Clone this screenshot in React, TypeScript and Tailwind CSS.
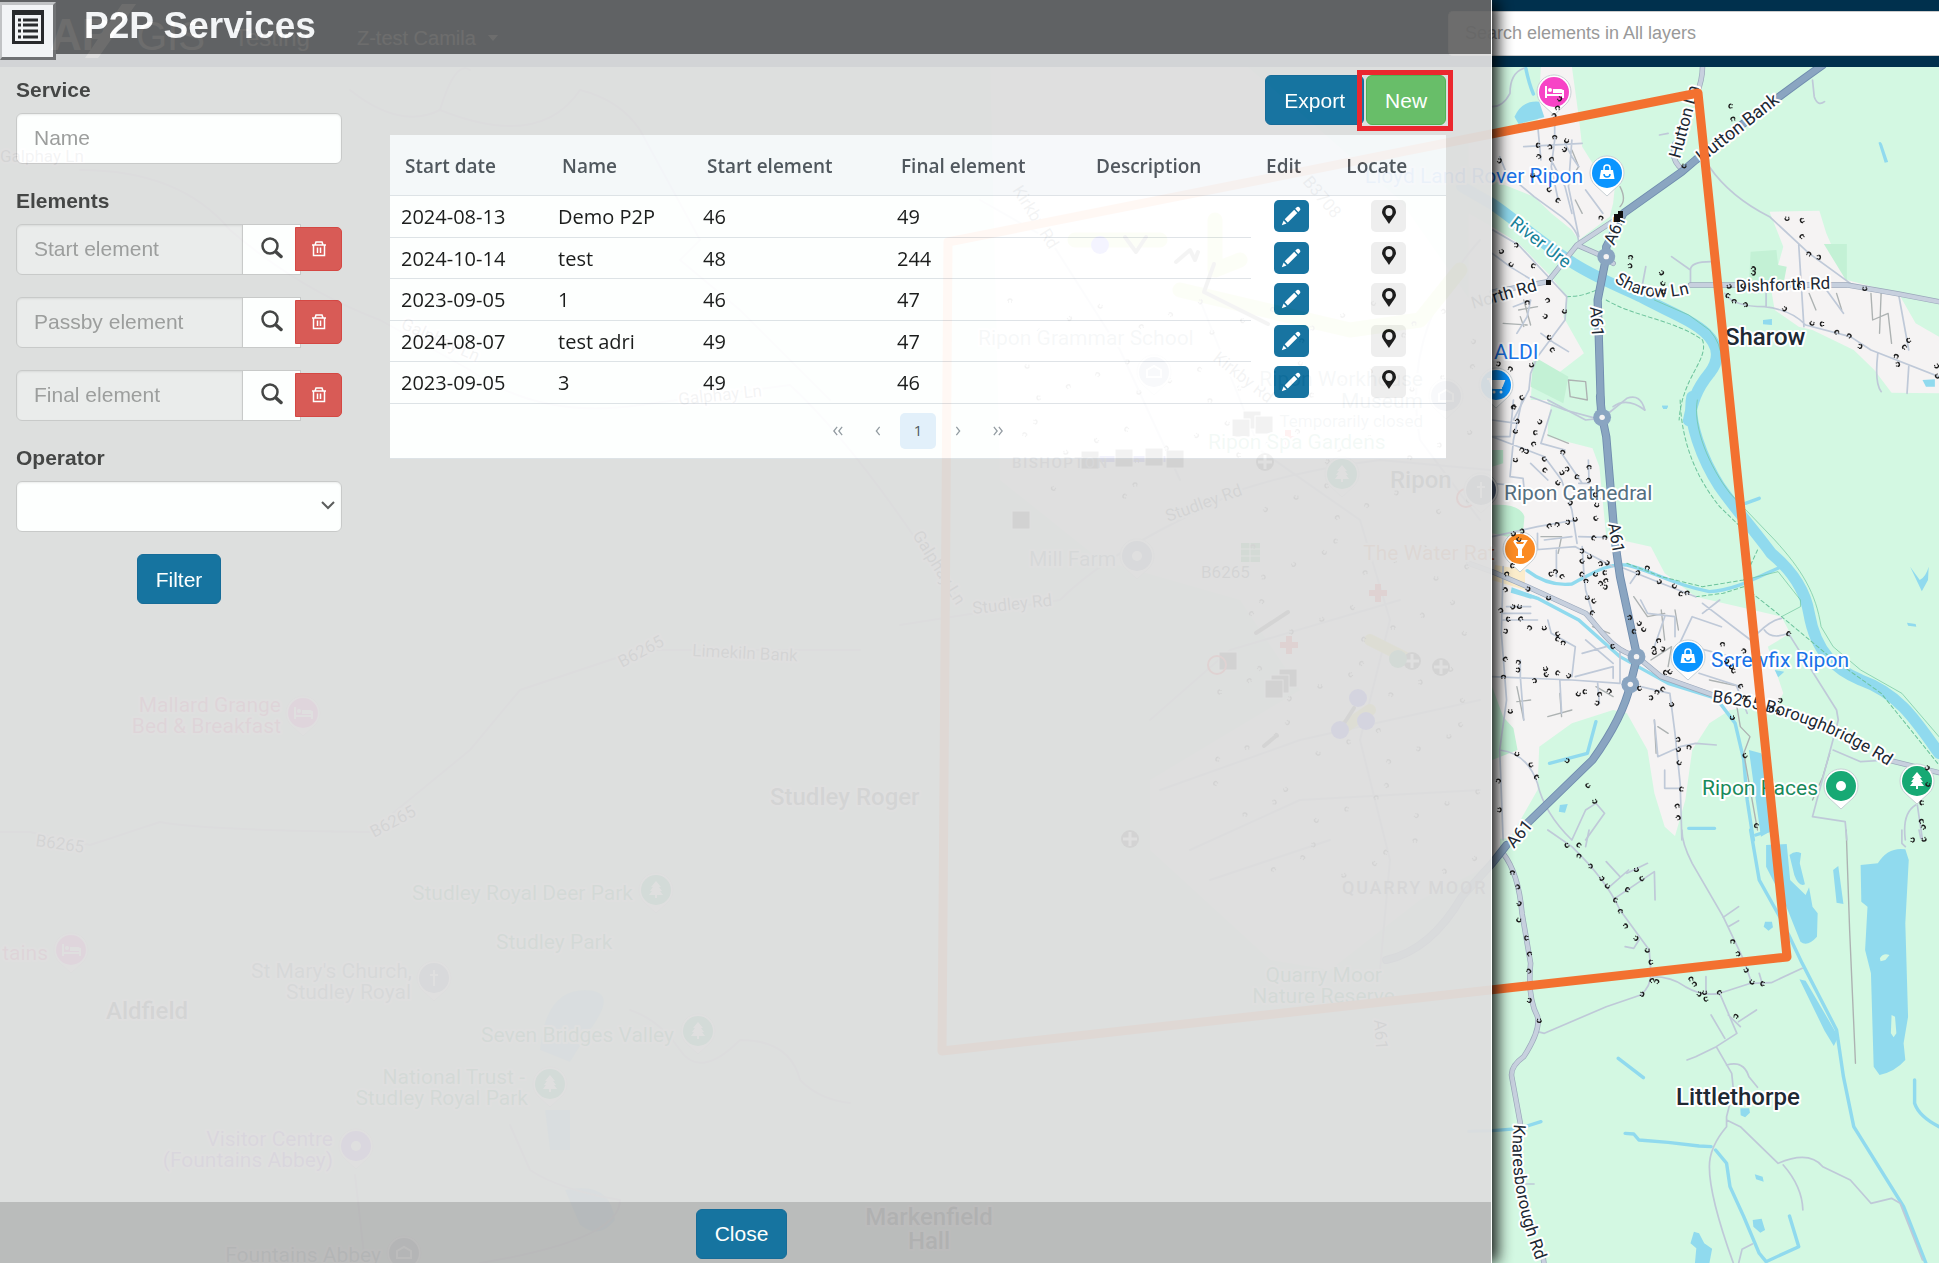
import React from "react";

/* ---------- Map data ---------- */

// Each sheet is drawn on its own local grid; the transform puts it on the map.
const SHEETS = [
  "translate(1400 0) scale(0.34375 0.33333)",
  "translate(1400 400) scale(0.34375 0.33333)",
  "translate(1400 830) scale(0.34375 0.33333)",
];

const URBAN = [
  "M410 200 L500 200 L520 350 L530 440 L560 490 L625 560 L620 610 L610 650 L520 720 L500 690 L440 640 L390 590 L268 540 L200 500 L200 420 L400 370Z M200 640 L268 680 L345 730 L440 830 L485 890 L475 950 L535 1060 L460 1120 L390 1070 L380 1200 L440 1210 L430 1265 L200 1265Z M1075 635 L1220 632 L1240 700 L1300 840 L1450 880 L1500 970 L1568 1010 L1568 1180 L1430 1178 L1380 1110 L1320 1050 L1200 990 L1160 980 L1090 930 L1080 870 L1115 740Z",
  "M200 0 L430 0 L430 110 L560 145 L580 200 L600 410 L730 440 L770 520 L860 590 L1110 650 L1135 700 L1070 740 L1115 880 L1100 910 L960 930 L900 970 L850 1050 L830 1200 L800 1308 L770 1280 L740 1180 L720 1050 L660 940 L620 930 L500 970 L405 1040 L400 1170 L320 1315 L200 1320Z",
  "",
];

const PARKS = [
  "M1020 755 L1095 750 L1100 795 L1125 800 L1115 855 L1015 855Z M1233 732 L1300 732 L1300 845Z M390 1070 L490 1130 L475 1210 L380 1160Z",
  "M268 315 Q350 310 362 350 L358 395 L320 412 L268 400Z M268 860 L300 950 L330 985 L342 1050 L268 1080Z M268 150 L300 150 L300 190 L268 200Z",
  "",
];

const LAKES = [
  "M333 350 Q355 300 405 305 L420 352 L345 372Z M1392 428 Q1400 420 1405 440 L1420 486 L1410 488Z M1056 960 L1082 957 L1082 975 L1056 973Z M762 1217 L780 1217 L776 1227 L766 1227Z M1520 1140 L1556 1138 L1556 1160 L1530 1160Z",
  "M1015 1050 L1050 1060 L1078 1110 L1084 1290 L1050 1310 L1035 1200Z M465 1215 L488 1212 L480 1238 L462 1235Z M1484 500 L1512 540 Q1530 530 1538 500 L1536 540 L1518 574Z M1475 668 L1500 672 L1502 680 L1478 677Z M1090 810 L1118 815 L1100 832Z M762 17 L780 17 L776 27 L766 27Z M325 562 L400 590 L380 596 L322 578Z",
  "M1065 45 L1125 42 L1135 150 L1180 195 L1190 172 L1200 230 L1215 250 L1213 320 Q1185 352 1165 335 L1120 220 L1065 110Z M1133 75 Q1150 60 1167 70 L1163 100 L1178 163 Q1160 172 1147 135Z M1340 105 L1390 100 Q1420 50 1470 58 L1480 90 L1470 280 L1478 560 L1465 640 L1470 690 Q1440 725 1395 735 L1378 710 L1370 430 L1353 360 L1360 230 L1342 215Z M1260 120 L1275 108 L1290 222 L1270 218Z M1062 275 L1082 275 L1085 292 L1072 302 L1058 290Z M1162 448 L1180 452 L1275 620 L1262 648 L1235 602Z M990 835 L1016 835 L1018 848 L1004 862 L991 856Z M1032 1033 L1055 1040 L1058 1055 L1036 1048Z M1026 1170 L1052 1166 L1062 1200 L1048 1208 L1028 1190Z M845 1240 L855 1205 L870 1210 L885 1240 L908 1256 L900 1300 L858 1300 L862 1255Z",
];

const ISLANDS = "M1396 385 Q1405 368 1424 375 L1412 390 L1398 394Z M1430 555 L1440 560 L1444 610 L1436 622 L1428 610Z";

const WIDE_RIVERS = [
  "M180 560 L268 612 C330 655 400 720 490 780 C560 830 640 860 700 890 C770 930 850 960 890 1000 C930 1040 930 1080 900 1120 C860 1170 850 1210 840 1262",
  "M850 -10 C835 60 880 180 930 260 C970 320 1030 390 1080 460 C1150 520 1180 580 1190 640 C1210 760 1270 810 1340 840 C1450 880 1500 960 1568 1060",
  "",
];

const STREAMS = [
  "M366 205 Q375 250 388 282",
  "M370 512 Q430 560 500 552 C560 520 600 490 660 495 C730 510 780 550 900 575 C980 570 1040 530 1110 500 M330 572 L400 595 L520 660 L640 770 L780 850 L920 895 L975 970 L1000 1080 L1010 1200 L1028 1320 M570 965 L545 1060 L435 1090 M840 1285 L915 1285 M1005 310 L1045 295",
  "M1020 0 L1045 150 L1110 270 L1170 400 L1270 600 L1290 740 L1320 890 L1465 1130 L1530 1300 M1035 15 L1080 0 M635 685 L708 743 M200 904 L268 902 L345 896 L410 875 M655 910 L680 912 L695 930 L780 937 L870 948 L905 950 M918 960 L950 1000 L960 1070 L1000 1160 L1045 1270 L1065 1295 L1160 1250 L1133 1158 M1497 750 L1497 820 Q1510 860 1568 890",
];

const PATHS = [
  "M485 890 Q540 890 590 860 M600 900 C680 950 800 960 880 1020 C900 1080 820 1130 812 1260",
  "M815 0 Q820 180 930 320 L1000 390 M660 490 L760 530 L880 560 L1000 540 M860 590 L940 580 L1000 560 L1110 650 L1250 770 L1400 880 L1568 1095 M1040 450 L1000 540",
  "",
];

const BANKS = [
  "M740 900 L840 945 L900 990 Q935 1030 935 1080",
  "M865 0 C850 80 900 200 960 280 L1090 420 C1170 510 1210 580 1225 680 L1260 740 L1340 810 L1460 880 L1568 1010 M1000 540 L1100 515 L1165 600 L1165 620 L1110 650",
  "",
];

const LANES = [
  "M400 370 L410 480 M360 440 L530 430 M450 330 L450 420 L440 500 L460 600 M290 470 L310 520 L390 590 L470 650 Q520 690 520 730 M500 420 L490 560 L510 660 L520 710 M540 570 L590 640 M360 205 Q320 220 320 280 Q300 320 268 320 M1200 240 L1205 290 Q1215 320 1235 305 M780 400 L755 405 M900 500 Q960 590 1075 650 L1190 760 L1310 850 M790 770 L845 810 L845 855 M845 810 Q845 785 905 785 M1065 855 L1065 920 M945 880 Q970 920 1060 920 Q1140 930 1180 975 L1310 1010 L1370 1050 L1568 1130 M1160 735 L1175 980 M1230 855 L1290 940 M1450 880 L1480 1050 M1390 1060 Q1380 1150 1400 1175 M1480 1100 L1475 1180 M270 690 L345 735 L440 840 L485 890 L480 960 L400 1070 L380 1120 L375 1170 L330 1260 M330 920 L380 900 L370 950 L340 1000 M380 1190 L480 1230 L570 1255 M600 1245 L660 1195 Q700 1180 712 1230 M445 490 L480 560 L500 640 M480 430 L500 470 L520 500 M268 760 L320 800 L400 850 M410 1000 L450 1030 L490 1055 M715 800 L705 855",
  "M330 0 L320 110 L268 110 M355 0 L330 120 L320 230 L358 235 L365 310 M268 110 L420 170 L470 240 L500 330 L515 430 M440 30 L410 130 L480 150 M470 160 L530 250 M548 180 L550 250 L520 250 M268 410 L400 380 L510 360 M385 450 L510 440 L620 500 M455 450 L455 530 M530 440 L535 520 L540 570 L560 640 M520 410 L600 412 M430 660 L440 700 L510 740 L500 830 M268 830 L500 840 L640 850 M465 840 L470 940 M350 780 L350 830 L360 960 M510 830 L620 800 L620 835 M575 850 L580 910 M640 750 L640 850 M540 720 L620 790 M700 600 L720 640 L800 650 L800 710 M740 740 L760 680 L770 650 M800 760 L850 650 L935 680 M880 610 L1020 720 M700 860 L785 880 L800 1000 L815 1150 L820 1320 M740 960 L750 1070 L815 1040 L860 1030 L920 1035 M770 1110 L770 1165 L815 1165 M1130 700 L1270 930 L1275 960 L1200 1250 L1295 1265 L1300 1320 M980 860 L1010 940 M870 820 L990 860 M1040 700 Q1080 660 1110 655 M1060 690 Q1080 720 1130 700 M850 740 L1000 780 M300 500 L295 700 L310 900 L290 1050 L300 1320 M290 1050 Q370 1060 400 1150 Q420 1240 500 1320 M500 1320 L540 1230 L570 1210 L595 1240 L540 1320 M1260 1050 L1340 1085 L1420 1080 M1470 1320 Q1460 1240 1500 1215 M1505 1215 L1520 1320 M1480 1100 L1568 1120 M430 0 L540 60 L585 55 M620 20 Q660 -10 712 30 M300 640 L380 640 M300 660 L400 660 M310 620 L380 620 M268 60 L340 70 M268 250 L320 255 M380 190 L430 240 M400 400 L400 450 M420 420 L500 410 M560 290 L600 300 M640 500 L760 550 L860 590 M670 550 L690 520 M530 760 L600 740 M880 640 L930 600",
  "M430 0 L500 50 Q600 150 640 240 L725 360 L730 430 Q730 470 700 495 L600 530 L420 610 L400 605 M735 440 Q790 440 830 470 Q880 500 930 490 L1020 460 L1080 458 L1170 415 M820 0 Q820 40 850 100 L940 260 L1000 390 L1020 450 M610 170 L665 120 M600 95 L640 140 M625 205 L740 125 L742 210 M660 130 L720 100 M940 262 L985 230 M955 290 L985 272 M655 350 L680 355 L695 330 M890 490 L890 440 M1045 430 L1055 465 M930 490 L980 610 L920 650 L860 680 L835 690 M985 575 L1037 540 M905 555 L945 625 M955 555 L990 590 M920 650 L965 730 L970 780 L950 860 L950 890 Q900 950 900 1010 Q900 1100 970 1300 M950 705 Q1000 690 1015 740 L1040 772 M950 870 L990 890 L1100 1000 Q1190 960 1230 1010 L1310 1050 L1370 1120 L1430 1105 L1455 1120 L1520 1290 M1115 1005 Q1170 1070 1172 1140 M985 1300 L995 1258 L1025 1242 M365 1062 L390 1062 M1460 0 L1460 40 L1470 50 M1510 0 L1515 25 M540 50 L550 0",
];

const FAINT_LANES = [
  "M345 930 L400 920 M350 950 L360 980 M360 900 L380 975 M300 970 L370 975 M490 1140 L540 1145 L545 1200 L495 1190Z M1370 880 L1375 960 L1420 940 L1430 1030 M1400 870 L1395 1000 M1190 880 L1210 930 M1270 880 L1285 930 M500 450 L520 500 L500 530 M510 600 L530 640 M640 560 Q660 600 640 620",
  "M680 590 L700 620 L720 650 L770 640 M760 630 L770 720 M800 630 L810 690 M730 780 L790 740 L780 800 M740 960 L745 1060 M750 980 L780 1000 M340 860 L360 960 M465 880 L470 950 M430 105 L490 130 M410 410 L470 410 L460 460 M980 920 L990 980 L1018 1010 L1000 1060 L1040 1290 M1250 1060 L1230 1130 L1200 1200 M900 840 L990 860 M560 680 L610 700 M570 860 L620 890 M430 950 L500 930 M340 905 L380 900",
  "M1298 0 L1308 300 L1325 700",
];

const SECONDARY = [
  "M880 200 Q880 240 862 285 M800 430 Q785 480 822 508 M845 855 L1300 855 L1450 882 L1568 905 M268 876 L430 845 L515 735 L640 650 M515 735 L575 762 L620 790",
  "M200 490 L268 515 L370 560 L540 640 C600 710 620 750 690 770 L760 830 L910 885 M1400 1075 L1568 1118",
  "M300 70 Q345 130 355 250 L380 400 Q370 500 400 560 Q410 600 360 680 Q320 710 325 740 L350 880 M415 1270 L420 1310",
];

const MAIN = [
  "M1230 195 Q1100 290 860 480 L820 515 L650 640 L600 740 L600 770 L575 900 L585 1240 L588 1265",
  "M582 -10 L588 50 L600 110 L625 420 L640 530 L690 770 L670 853 Q650 950 560 1080 L370 1270",
  "M310 45 L268 100 L180 200 Q90 360 -40 390",
];

const ROUNDABOUTS: [number, number][][] = [
  [[600, 770], [588, 1252]],
  [[688, 770], [670, 853]],
  [],
];

const ASSETS: [number, number][][] = [
  [[450, 410], [438, 440], [480, 450], [484, 424], [400, 436], [440, 476], [405, 468], [291, 483], [386, 528], [432, 570], [458, 600], [585, 652], [340, 735], [296, 756], [322, 795], [386, 797], [370, 906], [431, 900], [424, 950], [478, 936], [432, 1013], [442, 1048], [322, 1105], [288, 1092], [383, 1097], [353, 1194], [330, 1220], [671, 770], [671, 797], [762, 820], [764, 852], [960, 318], [968, 355], [1030, 805], [1030, 820], [1126, 658], [1168, 662], [1168, 708], [1190, 760], [1220, 772], [958, 861], [996, 860], [952, 886], [972, 902], [1007, 913], [1120, 928], [1198, 972], [1226, 972], [1270, 995], [1308, 1006], [1340, 1040], [1352, 868], [1478, 1022], [1466, 1040], [1444, 1067], [1450, 1093], [1562, 1100], [1562, 1130], [1160, 856], [458, 322], [450, 346], [466, 298], [826, 500], [765, 876]],
  [[330, 20], [343, 63], [408, 67], [335, 96], [392, 98], [388, 130], [356, 148], [370, 155], [336, 182], [418, 178], [420, 209], [474, 155], [488, 207], [472, 220], [458, 250], [513, 230], [550, 200], [550, 240], [497, 310], [572, 317], [566, 285], [433, 376], [458, 372], [490, 367], [510, 360], [568, 356], [562, 413], [596, 411], [357, 393], [331, 403], [345, 420], [325, 497], [310, 520], [308, 568], [374, 568], [432, 596], [437, 523], [470, 528], [453, 513], [531, 453], [552, 472], [528, 485], [527, 522], [541, 541], [585, 490], [604, 490], [568, 525], [594, 518], [598, 540], [585, 549], [599, 562], [545, 595], [562, 604], [558, 637], [720, 502], [694, 518], [755, 547], [797, 560], [815, 581], [835, 577], [295, 630], [330, 622], [347, 622], [313, 658], [350, 655], [378, 682], [309, 694], [420, 686], [457, 703], [457, 716], [475, 727], [670, 652], [697, 672], [708, 690], [679, 694], [752, 720], [740, 745], [766, 748], [740, 760], [617, 740], [305, 776], [345, 785], [345, 810], [424, 808], [424, 825], [457, 818], [301, 829], [393, 841], [492, 829], [518, 884], [536, 875], [580, 881], [610, 872], [575, 910], [321, 936], [695, 866], [763, 866], [748, 875], [732, 893], [791, 915], [784, 817], [770, 817], [938, 731], [1002, 752], [952, 785], [964, 803], [968, 813], [990, 857], [1004, 892], [1108, 902], [967, 955], [1002, 1068], [1129, 700], [841, 1040], [811, 1018], [811, 1050], [811, 1090], [817, 1167], [806, 1216], [811, 1252], [488, 1083], [340, 1064], [379, 1095], [396, 1130], [287, 1141], [291, 1230], [567, 1206], [545, 1158], [1035, 1276], [1080, 925], [1100, 935], [1535, 1105], [1535, 1155], [1516, 1208], [1516, 1262], [1524, 1280]],
  [[327, 126], [344, 170], [348, 222], [345, 272], [366, 324], [376, 370], [376, 422], [378, 512], [405, 574], [484, 47], [519, 44], [521, 76], [556, 108], [588, 147], [602, 170], [625, 210], [641, 242], [658, 287], [688, 326], [719, 363], [728, 397], [732, 450], [748, 453], [706, 493], [688, 121], [702, 147], [660, 178], [968, 333], [985, 371], [1008, 422], [1023, 458], [1053, 461], [846, 445], [858, 461], [872, 493], [886, 490], [888, 508], [928, 486], [978, 557], [1493, 30], [1525, 30]],
];

// Street fittings in the town, below the drawer.
const TOWN_ASSETS: [number, number][] = Array.from({ length: 190 }, (_, i) => {
  const col = i % 19;
  const row = Math.floor(i / 19);
  return [1010 + col * 25 + ((row * 17 + col * 5) % 19), 300 + row * 60 + ((col * 31 + row * 7) % 43)] as [number, number];
}).filter(([x, y]) => y < 500 || x > 1190 + (y > 720 ? 0 : (720 - y) / 3)).filter(([x, y]) => y < 850 || x > 1250);

type LabelData = { x: number; y: number; t: string; c?: string; s?: number; r?: number; a?: "start" | "middle" | "end"; w?: number };

const PINK = "#e5317f";
const BLUE = "#1a73e8";
const GREEN = "#188a5b";
const SLATE = "#56707f";
const DARK = "#202833";

const LABELS: LabelData[] = [
  { x: 281, y: 712, t: "Mallard Grange", c: PINK, a: "end" },
  { x: 281, y: 733, t: "Bed & Breakfast", c: PINK, a: "end" },
  { x: 48, y: 960, t: "tains", c: PINK, a: "end" },
  { x: 106, y: 1019, t: "Aldfield", s: 24, w: 500 },
  { x: 770, y: 805, t: "Studley Roger", s: 24, w: 500 },
  { x: 633, y: 900, t: "Studley Royal Deer Park", c: GREEN, a: "end" },
  { x: 496, y: 949, t: "Studley Park", c: GREEN },
  { x: 412, y: 978, t: "St Mary's Church,", c: SLATE, a: "end" },
  { x: 411, y: 999, t: "Studley Royal", c: SLATE, a: "end" },
  { x: 674, y: 1042, t: "Seven Bridges Valley", c: GREEN, a: "end" },
  { x: 525, y: 1084, t: "National Trust -", c: GREEN, a: "end" },
  { x: 528, y: 1105, t: "Studley Royal Park", c: GREEN, a: "end" },
  { x: 333, y: 1146, t: "Visitor Centre", c: "#8a4fd0", a: "end" },
  { x: 333, y: 1167, t: "(Fountains Abbey)", c: "#8a4fd0", a: "end" },
  { x: 381, y: 1262, t: "Fountains Abbey", c: SLATE, a: "end" },
  { x: 929, y: 1225, t: "Markenfield", s: 24, w: 500, a: "middle" },
  { x: 929, y: 1249, t: "Hall", s: 24, w: 500, a: "middle" },
  { x: 35, y: 846, t: "B6265", s: 17, r: 8 },
  { x: 374, y: 838, t: "B6265", s: 17, r: -28 },
  { x: 622, y: 668, t: "B6265", s: 17, r: -28 },
  { x: 692, y: 656, t: "Limekiln Bank", s: 17, r: 3 },
  { x: 0, y: 162, t: "Galphay Ln", s: 17 },
  { x: 400, y: 328, t: "Galphay Ln", s: 17, r: 24 },
  { x: 679, y: 405, t: "Galphay Ln", s: 17, r: -6 },
  { x: 912, y: 535, t: "Galphay Ln", s: 17, r: 58 },
  { x: 1012, y: 190, t: "Kirkby Rd", s: 17, r: 58 },
  { x: 1212, y: 360, t: "Kirkby Rd", s: 17, r: 38 },
  { x: 1302, y: 182, t: "B3708", s: 17, r: 50 },
  { x: 978, y: 345, t: "Ripon Grammar School", c: SLATE },
  { x: 1423, y: 386, t: "Ripon Workhouse", c: SLATE, a: "end" },
  { x: 1423, y: 408, t: "Museum", c: SLATE, a: "end" },
  { x: 1423, y: 427, t: "Temporarily closed", c: SLATE, s: 17, a: "end" },
  { x: 1208, y: 449, t: "Ripon Spa Gardens", c: GREEN },
  { x: 1390, y: 488, t: "Ripon", s: 24, w: 500 },
  { x: 1029, y: 566, t: "Mill Farm", c: SLATE },
  { x: 1201, y: 578, t: "B6265", s: 17 },
  { x: 1168, y: 522, t: "Studley Rd", s: 17, r: -20 },
  { x: 973, y: 614, t: "Studley Rd", s: 17, r: -6 },
  { x: 1382, y: 982, t: "Quarry Moor", c: GREEN, a: "end" },
  { x: 1395, y: 1003, t: "Nature Reserve", c: GREEN, a: "end" },
  { x: 1374, y: 1020, t: "A61", s: 17, r: 86 },
  { x: 1583, y: 183, t: "Lloyd Land Rover Ripon", c: BLUE, a: "end" },
  { x: 1495, y: 560, t: "The Water Rat", c: "#d0632a", a: "end" },
  { x: 1494, y: 359, t: "ALDI", c: BLUE },
  { x: 1504, y: 500, t: "Ripon Cathedral", c: SLATE },
  { x: 1711, y: 667, t: "Screwfix Ripon", c: BLUE },
  { x: 1818, y: 795, t: "Ripon Races", c: GREEN, a: "end" },
  { x: 1725, y: 345, t: "Sharow", s: 24, w: 500 },
  { x: 1676, y: 1105, t: "Littlethorpe", s: 24, w: 500 },
  { x: 1509, y: 225, t: "River Ure", c: "#178299", s: 18, r: 38 },
  { x: 1473, y: 309, t: "North Rd", s: 17, r: -16 },
  { x: 1614, y: 246, t: "A61", s: 17, r: -66 },
  { x: 1590, y: 307, t: "A61", s: 17, r: 86 },
  { x: 1608, y: 524, t: "A61", s: 17, r: 80 },
  { x: 1514, y: 849, t: "A61", s: 17, r: -50 },
  { x: 1680, y: 159, t: "Hutton Ln", s: 17, r: -75 },
  { x: 1702, y: 163, t: "Hutton Bank", s: 18, r: -38 },
  { x: 1736, y: 292, t: "Dishforth Rd", s: 17, r: -2 },
];

const CURVED = [
  { id: "sharow-ln", d: "M1614 281 Q1648 308 1700 290", t: "Sharow Ln" },
  { id: "boroughbridge", d: "M1712 702 Q1810 712 1900 774", t: "B6265 Boroughbridge Rd" },
  { id: "knaresborough", d: "M1514 1124 Q1506 1190 1542 1275", t: "Knaresborough Rd" },
];

type PinKind = "bed" | "bag" | "cart" | "glass" | "dot" | "tree" | "cross" | "plain";
const PINS: { x: number; y: number; c: string; k: PinKind }[] = [
  { x: 303, y: 713, c: "#ff45c8", k: "bed" },
  { x: 71, y: 950, c: "#ff45c8", k: "bed" },
  { x: 656, y: 890, c: "#18a870", k: "tree" },
  { x: 434, y: 978, c: "#7385a5", k: "cross" },
  { x: 698, y: 1031, c: "#18a870", k: "tree" },
  { x: 550, y: 1084, c: "#18a870", k: "tree" },
  { x: 356, y: 1146, c: "#9c5ef0", k: "dot" },
  { x: 404, y: 1253, c: "#6b7785", k: "plain" },
  { x: 1154, y: 372, c: "#7385a5", k: "plain" },
  { x: 1446, y: 396, c: "#7385a5", k: "plain" },
  { x: 1342, y: 474, c: "#18a870", k: "tree" },
  { x: 1481, y: 490, c: "#5f718f", k: "cross" },
  { x: 1137, y: 556, c: "#7385a5", k: "dot" },
  { x: 1554, y: 92, c: "#f743c6", k: "bed" },
  { x: 1607, y: 173, c: "#0a95ff", k: "bag" },
  { x: 1496, y: 385, c: "#0a95ff", k: "cart" },
  { x: 1520, y: 549, c: "#fb8b24", k: "glass" },
  { x: 1688, y: 657, c: "#0a95ff", k: "bag" },
  { x: 1841, y: 786, c: "#17a974", k: "dot" },
  { x: 1917, y: 781, c: "#17a974", k: "tree" },
];

const SQUARES = [
  [1090, 460], [1124, 458], [1154, 457], [1175, 459], [1021, 520], [1228, 661], [1288, 678], [1280, 684], [1274, 689], [1252, 420], [1241, 428], [1264, 425],
];

/* ---------- Map drawing ---------- */

function PinGlyph({ k }: { k: PinKind }) {
  switch (k) {
    case "bed":
      return (
        <g fill="none" stroke="#fff" strokeWidth="2">
          <path d="M-8 -6V6M-8 3H9V6M9 3V-2" />
          <circle cx="-4" cy="-2" r="2" fill="#fff" stroke="none" />
          <path d="M-1 1V-3H7a2 2 0 0 1 2 2V1Z" fill="#fff" stroke="none" />
        </g>
      );
    case "bag":
      return (
        <g>
          <path d="M-6 -3H6L7.500 6H-7.500Z" fill="#fff" />
          <path d="M-3 -3V-5a3 3 0 0 1 6 0V-3" fill="none" stroke="#fff" strokeWidth="1.500" />
          <path d="M-3 1a3 3 0 0 0 6 0" fill="none" stroke="#0a95ff" strokeWidth="1.500" />
        </g>
      );
    case "cart":
      return (
        <g fill="none" stroke="#fff" strokeWidth="1.800">
          <path d="M-9 -6H-6L-3 3H6" />
          <path d="M-6 -4H8L6 1H-4Z" fill="#fff" />
          <circle cx="-2" cy="7" r="1.500" fill="#fff" stroke="none" />
          <circle cx="5" cy="7" r="1.500" fill="#fff" stroke="none" />
        </g>
      );
    case "glass":
      return (
        <g fill="none" stroke="#fff" strokeWidth="2">
          <path d="M-6 -8H6L1 0V8M-4 8H4M-1 0V8M-6 -8L-1 0" />
          <path d="M-4 -5H4L0 1Z" fill="#fff" stroke="none" />
        </g>
      );
    case "dot":
      return <circle r="5" fill="#fff" />;
    case "tree":
      return <path d="M0 -9L5 -3H3L6 1H4L7 5H1V8H-1V5H-7L-4 1H-6L-3 -3H-5Z" fill="#fff" />;
    case "cross":
      return <path d="M0 -8V8M-4 -3H4" stroke="#fff" strokeWidth="2" />;
    default:
      return <path d="M-7 -2L0 -6L7 -2V5H-7Z" fill="none" stroke="#fff" strokeWidth="2" />;
  }
}

function Sheets({ data, ...rest }: { data: string[] } & React.SVGProps<SVGPathElement>) {
  return (
    <>
      {data.map((d, i) => (d ? <path key={i} d={d} transform={SHEETS[i]} {...rest} /> : null))}
    </>
  );
}

function Asset({ i }: { i: number }) {
  return (
    <path
      d="M-2 1a2 2 0 0 1 4 0M-2 2H-1M1 2H2"
      transform={`rotate(${(i * 67) % 360})`}
      fill="none"
      stroke="#1c1c1c"
      strokeWidth="1.400"
    />
  );
}

const haloText = "[paint-order:stroke] stroke-white stroke-[4px] [stroke-linejoin:round]";

function MapView() {
  const line = { fill: "none", strokeLinecap: "round", strokeLinejoin: "round" } as const;
  return (
    <svg
      viewBox="0 0 1939 1263"
      preserveAspectRatio="xMinYMin slice"
      className="absolute inset-0 h-full w-full font-['Roboto',sans-serif]"
      role="img"
      aria-label="Map"
    >
      <rect width="1939" height="1263" fill="#d3f8e2" />
      <path
        d="M990 60L1240 60L1400 200L1470 300L1500 330V860L1420 900L1330 970L1270 960L1150 850V780L1300 690L1240 600L1100 560L1000 480Z"
        fill="#f5f3f3"
      />
      <Sheets data={URBAN} fill="#f5f3f3" />
      <Sheets data={PARKS} fill="#c3f1d5" />
      <path d="M1495 565L1525 570L1525 590L1492 580Z" fill="#fbeccb" />
      <Sheets data={WIDE_RIVERS} {...line} stroke="#90daee" strokeWidth="34" />
      <Sheets data={STREAMS} {...line} stroke="#90daee" strokeWidth="10" />
      <Sheets data={LAKES} fill="#90daee" />
      <path d={ISLANDS} transform={SHEETS[2]} fill="#d3f8e2" />
      <g fill="#90daee">
        <path d="M540 1050Q545 990 585 990Q620 990 590 1030L570 1062Z" />
        <path d="M545 1110H570V1150H550ZM565 1190Q610 1180 615 1220Q600 1240 580 1225Z" />
      </g>
      <Sheets data={BANKS} {...line} stroke="#6cc39c" strokeWidth="2" />
      <Sheets data={PATHS} {...line} stroke="#6cc39c" strokeWidth="3" strokeDasharray="11 8" />
      <Sheets data={FAINT_LANES} {...line} stroke="#adb2b2" strokeWidth="4" />
      <Sheets data={LANES} {...line} stroke="#bfc9d8" strokeWidth="5" />
      <g {...line} stroke="#b9c4d6" strokeWidth="2">
        <path d="M350 90Q400 130 440 110Q455 60 470 70M440 110Q540 150 580 90Q620 100 640 130L700 240L680 260L740 310L830 400" />
        <path d="M80 170Q180 170 230 230Q300 290 380 320L470 370Q540 420 640 405L790 385Q850 440 930 560L960 600" />
        <path d="M0 832H30L90 845L160 822Q200 830 370 832L470 750L520 690L640 650L860 650" />
        <path d="M630 1010Q660 1020 680 1050Q700 1080 740 1040Q790 1040 800 1080Q820 1100 850 1103" />
        <path d="M510 1125L530 1170Q560 1190 620 1200Q620 1240 480 1263M355 1175L365 1263" />
        <path d="M900 625L1060 600Q1100 560 1180 520L1240 490Q1300 470 1380 460L1490 470" />
        <path d="M980 200L1050 240L1120 350L1180 480M1200 300L1260 450L1360 520L1390 620L1360 740L1390 860L1380 970" />
        <path d="M1150 720L1230 650L1400 600M1160 790L1300 740L1480 700M1190 850L1300 800L1480 790M1210 880L1330 840" />
        <path d="M1480 240Q1400 330 1420 440L1480 520" />
      </g>
      <Sheets data={SECONDARY} {...line} stroke="#9aa7ba" strokeWidth="16" />
      <Sheets data={SECONDARY} {...line} stroke="#c7d0de" strokeWidth="12" />
      <Sheets data={MAIN} {...line} stroke="#6f8cae" strokeWidth="24" />
      <Sheets data={MAIN} {...line} stroke="#8aa5c1" strokeWidth="19" />
      {ROUNDABOUTS.map((list, i) =>
        list.map(([x, y]) => (
          <g key={`${i}-${x}`} transform={`${SHEETS[i]} translate(${x} ${y})`}>
            <circle r="26" fill="#8aa5c1" />
            <circle r="8" fill="#f5f3f3" />
          </g>
        )),
      )}

      <g {...line}>
        <path d="M1075 240L1160 240M1215 220V270L1240 260M1180 290L1350 330L1420 320L1460 270" stroke="#c9e265" strokeWidth="15" />
        <path d="M1370 640L1410 660M1340 730L1370 710" stroke="#d8d830" strokeWidth="12" />
        <path d="M1125 237L1136 252L1146 237M1176 262L1190 250L1195 260L1198 252M1214 264L1204 292L1268 324M1256 633L1288 612M1264 746L1276 736M1345 722L1354 708" stroke="#333" strokeWidth="4" />
        <path d="M1095 459H1165" stroke="#2020d0" strokeWidth="6" />
      </g>
      {SQUARES.map(([x, y], i) => (
        <rect key={i} x={x - 9} y={y - 9} width="18" height="18" fill="#000" stroke="#fff" />
      ))}
      <g fill="#3333ff">
        <circle cx="1358" cy="698" r="9" />
        <circle cx="1366" cy="721" r="9" />
        <circle cx="1340" cy="730" r="9" />
        <circle cx="1100" cy="245" r="9" />
      </g>
      <path d="M1378 584V602M1369 593H1387M1289 636V654M1280 645H1298M1288 430V448M1279 439H1297" stroke="#f00" strokeWidth="6" />
      <g fill="none" stroke="#f00" strokeWidth="2">
        <circle cx="1217" cy="665" r="9" />
        <circle cx="1466" cy="498" r="9" />
      </g>
      {[[1265, 462], [1412, 661], [1441, 667], [1130, 839]].map(([x, y]) => (
        <g key={x} transform={`translate(${x} ${y})`}>
          <circle r="9" fill="#222" />
          <path d="M-7 0H7M0 -7V7" stroke="#fff" strokeWidth="3" />
        </g>
      ))}
      <path d="M1241 543H1260V562H1241Z" fill="#1a9a40" />
      <path d="M1250 543V562M1241 549H1260M1241 556H1260" stroke="#fff" />
      <circle cx="1398" cy="659" r="9" fill="#1a9a50" />

      {TOWN_ASSETS.map(([x, y], i) => (
        <g key={i} transform={`translate(${x} ${y})`}>
          <Asset i={i} />
        </g>
      ))}

      {PINS.map((p) => (
        <g key={`${p.x}-${p.y}`} transform={`translate(${p.x} ${p.y})`}>
          <path d="M0 23L-12 12A17 17 0 1 1 12 12Z" fill="#fff" stroke="#c8d0d4" strokeWidth="1" />
          <circle r="15" fill={p.c} />
          <PinGlyph k={p.k} />
        </g>
      ))}

      {LABELS.map((l, i) => (
        <text
          key={i}
          x={l.x}
          y={l.y}
          textAnchor={l.a ?? "start"}
          transform={l.r ? `rotate(${l.r} ${l.x} ${l.y})` : undefined}
          fontSize={l.s ?? 21}
          fontWeight={l.w ?? 400}
          fill={l.c ?? DARK}
          className={haloText}
        >
          {l.t}
        </text>
      ))}
      <text x="1342" y="894" fontSize="18" fontWeight="500" fill="#4a5563" className="tracking-widest">
        QUARRY MOOR
      </text>
      <text x="1012" y="468" fontSize="15" fontWeight="500" fill="#4a5563" className="tracking-widest">
        BISHOPTON
      </text>
      <defs>
        {CURVED.map((c) => (
          <path key={c.id} id={c.id} d={c.d} />
        ))}
      </defs>
      {CURVED.map((c) => (
        <text key={c.id} fontSize="17" fill={DARK} className={haloText}>
          <textPath href={`#${c.id}`}>{c.t}</textPath>
        </text>
      ))}

      {ASSETS.map((list, s) =>
        list.map(([x, y], i) => (
          <g key={`${s}-${i}`} transform={`translate(${1400 + x / 2.909} ${[0, 400, 830][s] + y / 3})`}>
            <Asset i={i} />
          </g>
        )),
      )}
      <path d="M1614 214h4v-3h5v7h-3v4h-6Z" fill="#111" />
      <path d="M1546 280h5v5h-5Z" fill="#111" />

      <path d="M948 242L1698 93L1787 957L942 1051Z" fill="none" stroke="#f37130" strokeWidth="9" strokeLinejoin="round" />
    </svg>
  );
}

/* ---------- Icons ---------- */

function ListIcon() {
  return (
    <svg viewBox="0 0 32 34" className="h-[34px] w-8" aria-hidden="true">
      <path d="M0 0H32V34H0Z" fill="#2b2b2b" />
      <path d="M3 5H29V31H3Z" fill="#fff" />
      <path d="M6 10H9M6 15H9M6 21H9M6 27H9" stroke="#2b2b2b" strokeWidth="3" />
      <path d="M11 10H26M11 15H26M11 21H26M11 27H26" stroke="#2b2b2b" strokeWidth="3" />
    </svg>
  );
}

function SearchIcon() {
  return (
    <svg viewBox="0 0 22 22" className="h-[22px] w-[22px]" aria-hidden="true">
      <circle cx="9" cy="9" r="7.500" fill="none" stroke="#3d3d3d" strokeWidth="2.500" />
      <path d="M15 15L20 19.500" stroke="#3d3d3d" strokeWidth="3.500" strokeLinecap="round" />
    </svg>
  );
}

function TrashIcon() {
  return (
    <svg viewBox="0 0 16 16" className="h-4 w-4" fill="none" stroke="#fff" strokeWidth="1.500" aria-hidden="true">
      <path d="M1 4H15M4 4L5 1H11L12 4M2.500 4V14.500H13.500V4M6.500 6.500V12M9.500 6.500V12" />
    </svg>
  );
}

function PencilIcon() {
  return (
    <svg viewBox="0 0 20 20" className="h-5 w-5" fill="#fff" aria-hidden="true">
      <path d="M16 1Q17 0.300 18 1L19 2.300Q19.800 3.300 19 4.200L17.300 5.900L14.200 2.800Z" />
      <path d="M13.200 3.800L16.300 6.900L6.800 16.400L3.700 13.300Z" />
      <path d="M2.600 14.600L5.500 17.500L0.800 19.300Z" />
    </svg>
  );
}

function MarkerIcon() {
  return (
    <svg viewBox="0 0 14 19" className="h-[19px] w-3.5" aria-hidden="true">
      <path d="M7 0A7 7 0 0 1 14 7C14 10 10 14 7 19C4 14 0 10 0 7A7 7 0 0 1 7 0ZM7 3A3.500 4 0 1 0 7 11A3.500 4 0 1 0 7 3Z" fill="#111" fillRule="evenodd" />
    </svg>
  );
}

function Chevrons({ left, double }: { left?: boolean; double?: boolean }) {
  const d = left ? "M6 1L2 6L6 11" : "M2 1L6 6L2 11";
  return (
    <svg viewBox={double ? "0 0 14 12" : "0 0 8 12"} className={double ? "h-2.5 w-3" : "h-2.5 w-2"} fill="none" stroke="#8f979e" strokeWidth="1.500" aria-hidden="true">
      <path d={d} />
      {double && <path d={d} transform="translate(6 0)" />}
    </svg>
  );
}

/* ---------- Drawer ---------- */

const labelClass = "mb-2 block text-[21px] leading-[30px] font-bold text-[#3d3d3d]";
const fieldClass = "h-[51px] border border-[#c8c8c8] px-[17px] pb-0.5 text-[21px] text-[#555] shadow-[inset_0_1px_2px_rgba(0,0,0,0.08)] placeholder:text-[#999] placeholder:opacity-100";
const primaryClass = "h-[50px] rounded-md border border-[#0c6594] bg-[#0c6d9c] px-[18px] text-[21px] leading-none text-white";

function ElementField({ name }: { name: string }) {
  return (
    <div className="mb-[22px] flex items-start">
      <input aria-label={name} placeholder={name} disabled className={`${fieldClass} w-[227px] rounded-l-md bg-[#ebebeb]`} />
      <button type="button" aria-label={`Search ${name}`} className="-ml-px flex h-[51px] w-[59px] items-center justify-center border border-[#c8c8c8] bg-white pb-1">
        <SearchIcon />
      </button>
      <button type="button" aria-label={`Clear ${name}`} className="relative mt-[3px] -ml-1.5 flex h-11 w-[47px] items-center justify-center rounded-r-[5px] border border-[#d43f3a] bg-[#d9534f]">
        <TrashIcon />
      </button>
    </div>
  );
}

const ROWS = [
  ["2024-08-13", "Demo P2P", "46", "49"],
  ["2024-10-14", "test", "48", "244"],
  ["2023-09-05", "1", "46", "47"],
  ["2024-08-07", "test adri", "49", "47"],
  ["2023-09-05", "3", "49", "46"],
];

const HEADS = ["Start date", "Name", "Start element", "Final element", "Description", "Edit", "Locate"];

function ServicesTable() {
  return (
    <div className="border-b border-[#dee2e6] bg-white font-['Open_Sans','Noto_Sans',sans-serif]">
      <table className="w-full table-fixed border-collapse text-left text-[20px]">
        <colgroup>
          <col className="w-[14.87%]" />
          <col className="w-[13.73%]" />
          <col className="w-[18.37%]" />
          <col className="w-[18.47%]" />
          <col className="w-[16.1%]" />
          <col className="w-[7.6%]" />
          <col />
        </colgroup>
        <thead>
          <tr className="h-[60px] border-b border-[#dee2e6] bg-[#f6f8fa] text-[19px] text-[#495057]">
            {HEADS.map((h) => (
              <th key={h} scope="col" className="pt-0.5 pl-[15px] font-semibold">
                {h}
              </th>
            ))}
          </tr>
        </thead>
        <tbody className="text-[#111]">
          {ROWS.map((row, i) => (
            <tr key={i} className="group h-[42px] even:h-[41px]">
              {[...row, ""].map((cell, j) => (
                <td key={j} className="border-b border-[#dee2e6] pt-0.5 pl-[11px] leading-7">
                  {cell}
                </td>
              ))}
              <td className="group-last:border-b group-last:border-[#dee2e6]">
                <button type="button" aria-label="Edit" className="mx-auto flex h-8 w-[35px] items-center justify-center rounded-[5px] bg-[#0c6d9c]">
                  <PencilIcon />
                </button>
              </td>
              <td className="group-last:border-b group-last:border-[#dee2e6]">
                <button type="button" aria-label="Locate" className="mx-auto flex h-8 w-[35px] items-center justify-center rounded-[5px] bg-[#eee] pb-1">
                  <MarkerIcon />
                </button>
              </td>
            </tr>
          ))}
        </tbody>
      </table>
      <nav aria-label="Pages" className="flex h-[54px] items-center justify-center gap-1 text-[15px] text-[#6c757d]">
        <button type="button" aria-label="First page" className="flex size-9 items-center justify-center"><Chevrons left double /></button>
        <button type="button" aria-label="Previous page" className="flex size-9 items-center justify-center"><Chevrons left /></button>
        <button type="button" className="size-9 rounded-[5px] bg-[#e3f0fb] text-[#495057]">1</button>
        <button type="button" aria-label="Next page" className="flex size-9 items-center justify-center"><Chevrons /></button>
        <button type="button" aria-label="Last page" className="flex size-9 items-center justify-center"><Chevrons double /></button>
      </nav>
    </div>
  );
}

function Drawer() {
  return (
    <section className="absolute inset-y-0 left-0 flex w-[76.95%] flex-col border-r border-white bg-[#dedede] opacity-95 shadow-[5px_0_15px_#000]">
      <header className="flex h-[54px] items-start bg-[#666]">
        <button type="button" aria-label="Menu" className="mt-0.5 flex h-[58px] w-14 shrink-0 items-center justify-center border-[3px] border-l-2 border-t-[#ccc] border-r-[#767676] border-b-[#767676] border-l-[#ccc] bg-white pb-2">
          <ListIcon />
        </button>
        <h1 className="ml-7 text-[37px] leading-[52px] font-bold text-white">P2P Services</h1>
      </header>
      <div className="flex flex-1 items-start pt-[21px] pr-[45px] pl-4">
        <form className="w-[326px] shrink-0" onSubmit={(e) => e.preventDefault()}>
          <label htmlFor="service" className={labelClass}>Service</label>
          <input id="service" placeholder="Name" className={`${fieldClass} mb-[22px] w-full rounded-md bg-white`} />
          <h2 className={labelClass}>Elements</h2>
          <ElementField name="Start element" />
          <ElementField name="Passby element" />
          <ElementField name="Final element" />
          <label htmlFor="operator" className={labelClass}>Operator</label>
          <div className="relative mb-[22px]">
            <select id="operator" defaultValue="" className={`${fieldClass} block w-full appearance-none rounded-md bg-white`}>
              <option value=""></option>
            </select>
            <svg viewBox="0 0 14 9" className="pointer-events-none absolute top-5 right-[7px] h-[9px] w-3.5" fill="none" stroke="#555" strokeWidth="2" aria-hidden="true">
              <path d="M1 1L7 7L13 1" />
            </svg>
          </div>
          <div className="flex justify-center">
            <button type="submit" className={primaryClass}>Filter</button>
          </div>
        </form>
        <div className="ml-12 min-w-0 flex-1">
          <div className="mb-2.5 flex justify-end gap-0.5">
            <button type="button" className={primaryClass}>Export</button>
            <div className="relative">
              <button type="button" className="h-[50px] rounded-md border border-[#4cae4c] bg-[#62bb62] px-[18px] text-[21px] leading-none text-white">New</button>
              <span className="pointer-events-none absolute -top-[5px] -right-[7px] -bottom-1.5 -left-[9px] border-[5px] border-[#ed1c24]" />
            </div>
          </div>
          <ServicesTable />
        </div>
      </div>
      <footer className="flex h-[61px] items-center justify-center bg-[#b9b9b9] pt-0.5 pr-2">
        <button type="button" className={primaryClass}>Close</button>
      </footer>
    </section>
  );
}

/* ---------- Top bar ---------- */

function TopBar() {
  return (
    <header className="relative flex h-[67px] items-center bg-[#00304d] pl-[50px] text-white">
      <svg viewBox="0 0 86 60" className="h-[60px] w-[86px]" aria-hidden="true">
        <text x="0" y="46" fontSize="44" fontWeight="700" fill="#fff">AP</text>
        <path d="M72 0H86L48 54H35Z" fill="#fff" />
      </svg>
      <span className="pt-1 text-[40px] leading-none">GIS</span>
      <span className="ml-[29px] pt-2 text-[24px]">Testing</span>
      <button type="button" className="ml-[47px] flex items-center gap-3 pt-2 text-[20px]">
        Z-test Camila
        <svg viewBox="0 0 10 6" className="h-1.5 w-2.5" fill="#fff" aria-hidden="true">
          <path d="M0 0H10L5 6Z" />
        </svg>
      </button>
      <input
        aria-label="Search elements"
        placeholder="Search elements in All layers"
        className="ml-auto h-[45px] w-[26%] rounded-l-[5px] border border-r-0 border-[#ccc] bg-white px-4 text-[18px] text-[#555] placeholder:text-[#999] placeholder:opacity-100"
      />
    </header>
  );
}

export default function App() {
  return (
    <main className="relative h-screen min-h-[700px] overflow-hidden font-['Liberation_Sans',Arial,sans-serif]">
      <MapView />
      <TopBar />
      <Drawer />
    </main>
  );
}
